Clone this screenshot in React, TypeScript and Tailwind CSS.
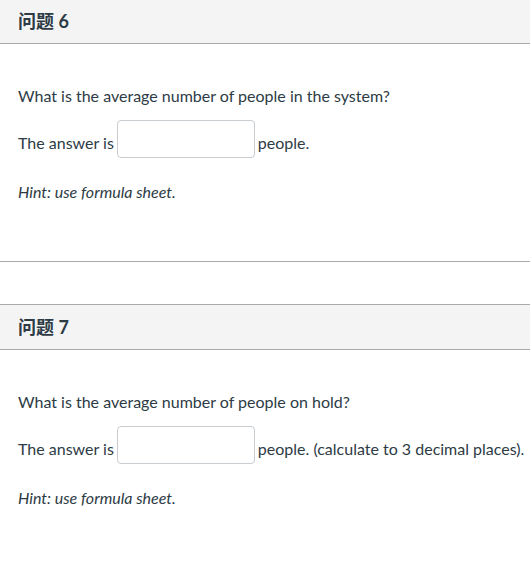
import React from "react";

function Question({ num, text, suffix }: { num: number; text: string; suffix: string }) {
  return (
    <div className="border-b border-[#aaaaaa]">
      <div className="h-[46px] border-y border-[#aaaaaa] bg-[#f4f4f4] px-[18px] flex items-center">
        <span className="text-[18px] font-bold text-[#2d3b45] [font-family:Lato,'Noto_Sans_CJK_SC',sans-serif]">
          问题 {num}
        </span>
      </div>
      <div className="pt-[40px] pb-[57px] px-[18px] text-[16px] leading-[24px] text-[#2d3b45]">
        <p>{text}</p>
        <div className="mt-[12px] flex items-end whitespace-nowrap">
          <span className="mb-[3px]">The answer is</span>
          <input
            type="text"
            className="mx-[3px] h-[38px] w-[138px] shrink-0 rounded-[4px] border border-[#c7cdd1] bg-white"
          />
          <span className="mb-[3px]">{suffix}</span>
        </div>
        <p className="mt-[22px] italic">Hint: use formula sheet.</p>
      </div>
    </div>
  );
}

export default function App() {
  return (
    <div className="min-h-[566px] bg-white overflow-hidden [font-family:Lato,'Noto_Sans_CJK_SC',sans-serif]">
      <div className="-mt-[2px]">
        <Question num={6} text="What is the average number of people in the system?" suffix="people." />
      </div>
      <div className="mt-[42px]">
        <Question num={7} text="What is the average number of people on hold?" suffix="people. (calculate to 3 decimal places)." />
      </div>
    </div>
  );
}
